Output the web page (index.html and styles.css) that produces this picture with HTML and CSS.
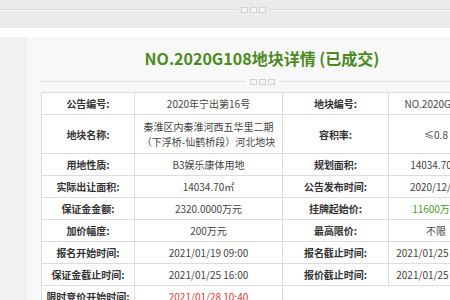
FILE: index.html
```html
<!DOCTYPE html>
<html>
<head>
<meta charset="utf-8">
<link rel="stylesheet" href="styles.css">
</head>
<body>
<div class="topbar">
  <div class="rule"><span class="mark"><i></i><i></i><i></i></span></div>
</div>
<div class="gap"></div>
<div class="page">
  <div class="gutter"></div>
  <div class="panel">
    <h1 class="title">NO.2020G108地块详情 (已成交)</h1>
    <div class="rule rule-sub"><span class="mark"><i></i><i></i><i></i></span></div>
    <table class="info">
      <colgroup><col class="c1"><col class="c2"><col class="c3"><col class="c4"></colgroup>
      <tr><th>公告编号:</th><td>2020年宁出第16号</td><th>地块编号:</th><td>NO.2020G108</td></tr>
      <tr class="tall"><th>地块名称:</th><td>秦淮区内秦淮河西五华里二期<br>（下浮桥-仙鹤桥段）河北地块</td><th>容积率:</th><td>≤0.8</td></tr>
      <tr><th>用地性质:</th><td>B3娱乐康体用地</td><th>规划面积:</th><td>14034.70㎡</td></tr>
      <tr><th>实际出让面积:</th><td>14034.70㎡</td><th>公告发布时间:</th><td>2020/12/25</td></tr>
      <tr><th>保证金金额:</th><td>2320.0000万元</td><th>挂牌起始价:</th><td class="green">11600万元</td></tr>
      <tr><th>加价幅度:</th><td>200万元</td><th>最高限价:</th><td>不限</td></tr>
      <tr><th>报名开始时间:</th><td>2021/01/19 09:00</td><th>报名截止时间:</th><td>2021/01/25 16:00</td></tr>
      <tr><th>保证金截止时间:</th><td>2021/01/25 16:00</td><th>报价截止时间:</th><td>2021/01/25 16:00</td></tr>
      <tr><th>限时竞价开始时间:</th><td class="red">2021/01/28 10:40</td><td colspan="2"></td></tr>
    </table>
  </div>
</div>
</body>
</html>
```

FILE: styles.css
```css
html, body {
  margin: 0;
  padding: 0;
  overflow: hidden;
  width: 450px;
  height: 300px;
  font-family: "Noto Sans CJK SC", "Noto Sans", sans-serif;
  color: #444;
}
.topbar {
  height: 28px;
  background: #ebebeb;
  padding-top: 9px;
  box-sizing: border-box;
}
.rule {
  height: 1px;
  background: #d6d6d6;
  box-shadow: 0 1px 0 #f8f8f8;
  display: flex;
  justify-content: center;
  align-items: center;
}
.topbar .rule .mark {
  background: #ebebeb;
  margin-left: 56px;
}
.mark {
  display: flex;
  gap: 2px;
  padding: 0 4px;
  background: #f8f8f8;
}
.mark i {
  display: block;
  width: 5px;
  height: 4px;
  border: 1px solid #d0d0d0;
  background: #f4f4f4;
}
.gap {
  height: 9px;
  background: #fff;
}
.page {
  display: flex;
  height: 263px;
}
.gutter {
  width: 27px;
  flex-shrink: 0;
  background: #f2f2f2;
}
.panel {
  width: 442px;
  flex-shrink: 0;
  background: #f8f8f8;
  padding: 9px 14px 0;
}
.title {
  margin: 0;
  text-align: center;
  font-size: 16px;
  line-height: 24px;
  font-weight: 700;
  color: #4b8a1c;
}
.rule-sub {
  margin-top: 11px;
  background: #e0e0e0;
  box-shadow: none;
}
.info {
  margin-top: 10px;
  width: 442px;
  border-collapse: collapse;
  table-layout: fixed;
  background: #fff;
  font-size: 10px;
}
.c1 { width: 93px; }
.c2 { width: 148px; }
.c3 { width: 106px; }
.c4 { width: 95px; }
.info th, .info td {
  border: 1px solid #dcdcdc;
  padding: 3px 2px;
  line-height: 15px;
  text-align: center;
  white-space: nowrap;
  overflow: hidden;
}
.info th {
  font-weight: 700;
  color: #333;
}
.info td { color: #444; }
.info tr.tall td, .info tr.tall th {
  padding: 4px 2px;
  line-height: 15px;
}
.info td.green { color: #3f9a2a; }
.info td.red { color: #e0353a; }
```
